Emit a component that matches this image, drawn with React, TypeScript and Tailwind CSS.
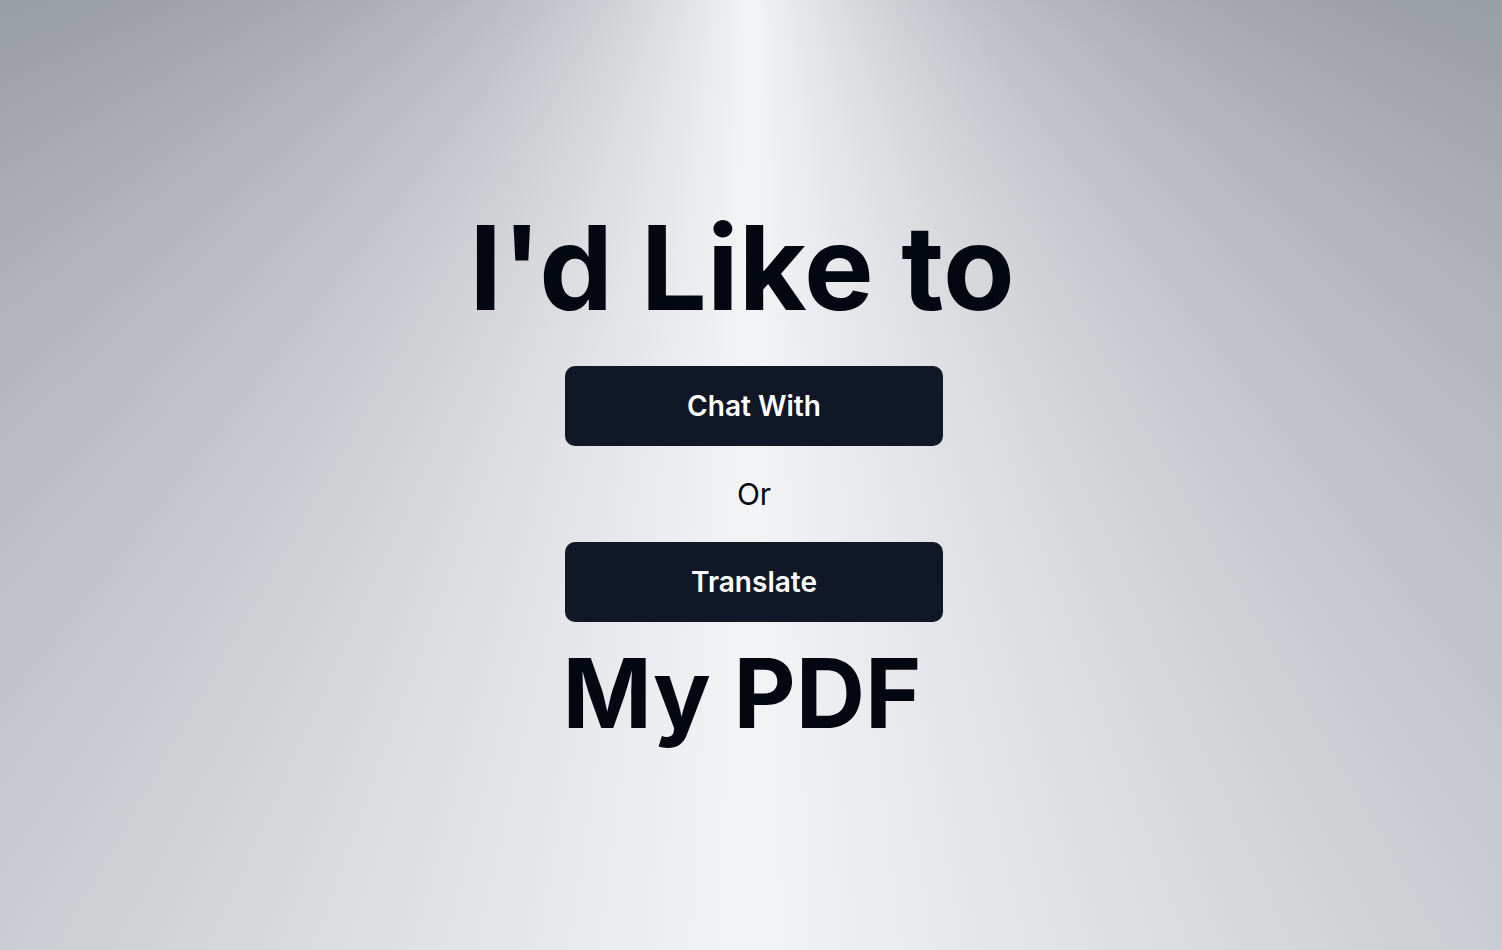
export default function App() {
  return (
    <div className="min-h-screen w-full bg-[conic-gradient(at_50%_-250px,#111827,#f3f4f6,#111827)] font-['Inter',sans-serif] text-gray-950">
      <main className="flex min-h-screen flex-col items-center justify-center">
        <h1 className="pr-[18px] text-[117px] font-bold leading-none">I'd Like to</h1>

        <div className="mt-[40px] flex flex-col items-center pl-[6px]">
          <button className="h-20 w-[378px] rounded-[10px] bg-gray-900 text-[28px] font-semibold text-white">
            Chat With
          </button>
          <p className="my-[30px] text-3xl">Or</p>
          <button className="h-20 w-[378px] rounded-[10px] bg-gray-900 text-[28px] font-semibold text-white">
            Translate
          </button>
        </div>

        <h1 className="mt-[23px] pr-[18px] text-8xl font-bold leading-none">My PDF</h1>
      </main>
    </div>
  );
}
